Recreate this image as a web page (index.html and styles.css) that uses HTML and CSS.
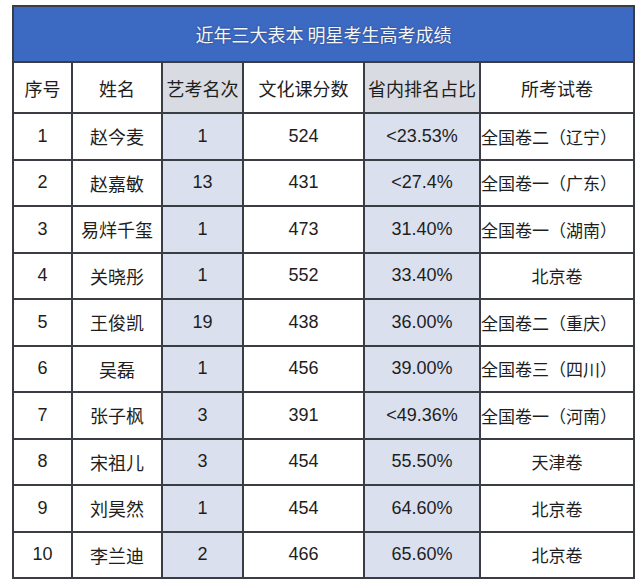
FILE: index.html
```html
<!DOCTYPE html>
<html lang="zh">
<head>
<meta charset="utf-8">
<title>近年三大表本 明星考生高考成绩</title>
<link rel="stylesheet" href="styles.css">
</head>
<body>
<table class="grid">
  <colgroup>
    <col class="c1"><col class="c2"><col class="c3"><col class="c4"><col class="c5"><col class="c6">
  </colgroup>
  <thead>
    <tr class="title-row"><th colspan="6" class="title">近年三大表本 明星考生高考成绩</th></tr>
    <tr class="head-row">
      <th>序号</th><th>姓名</th><th class="hl-head">艺考名次</th><th>文化课分数</th><th class="hl-head">省内排名占比</th><th>所考试卷</th>
    </tr>
  </thead>
  <tbody>
    <tr><td>1</td><td class="cn name">赵今麦</td><td class="hl">1</td><td>524</td><td class="hl">&lt;23.53%</td><td class="cn wide">全国卷二（辽宁）</td></tr>
    <tr><td>2</td><td class="cn name">赵嘉敏</td><td class="hl">13</td><td>431</td><td class="hl">&lt;27.4%</td><td class="cn wide">全国卷一（广东）</td></tr>
    <tr><td>3</td><td class="cn name">易烊千玺</td><td class="hl">1</td><td>473</td><td class="hl">31.40%</td><td class="cn wide">全国卷一（湖南）</td></tr>
    <tr><td>4</td><td class="cn name">关晓彤</td><td class="hl">1</td><td>552</td><td class="hl">33.40%</td><td class="cn">北京卷</td></tr>
    <tr><td>5</td><td class="cn name">王俊凯</td><td class="hl">19</td><td>438</td><td class="hl">36.00%</td><td class="cn wide">全国卷二（重庆）</td></tr>
    <tr><td>6</td><td class="cn name">吴磊</td><td class="hl">1</td><td>456</td><td class="hl">39.00%</td><td class="cn wide">全国卷三（四川）</td></tr>
    <tr><td>7</td><td class="cn name">张子枫</td><td class="hl">3</td><td>391</td><td class="hl">&lt;49.36%</td><td class="cn wide">全国卷一（河南）</td></tr>
    <tr><td>8</td><td class="cn name">宋祖儿</td><td class="hl">3</td><td>454</td><td class="hl">55.50%</td><td class="cn">天津卷</td></tr>
    <tr><td>9</td><td class="cn name">刘昊然</td><td class="hl">1</td><td>454</td><td class="hl">64.60%</td><td class="cn">北京卷</td></tr>
    <tr><td>10</td><td class="cn name">李兰迪</td><td class="hl">2</td><td>466</td><td class="hl">65.60%</td><td class="cn">北京卷</td></tr>
  </tbody>
</table>
</body>
</html>
```
FILE: styles.css
```css
html, body {
  margin: 0;
  padding: 0;
  background: #ffffff;
}
body {
  padding: 5px 8px 0 12px;
  font-family: "Liberation Sans", "Noto Sans CJK SC", sans-serif;
  color: #1e1e1e;
}
.grid {
  border-collapse: collapse;
  table-layout: fixed;
  width: 621px;
  border: 2px solid #333a44;
}
.c1 { width: 59px; }
.c2 { width: 90px; }
.c3 { width: 81px; }
.c4 { width: 121px; }
.c5 { width: 116px; }
.c6 { width: 154px; }

.grid th, .grid td {
  border: 2px solid #3a3d44;
  text-align: center;
  vertical-align: middle;
  padding: 0;
  white-space: nowrap;
  overflow: hidden;
}
.title-row { height: 56px; }
.title {
  background: #3c69c2;
  border-bottom: 2px solid #2d3f66;
  color: #f4f6fb;
  font-family: "Noto Sans CJK SC", sans-serif;
  font-weight: 400;
  font-size: 18px;
  text-shadow: 0 0 2px #233a6a;
  padding-top: 2px;
}
.head-row { height: 51px; }
.head-row th {
  font-family: "Noto Sans CJK SC", sans-serif;
  font-weight: 400;
  font-size: 18px;
  color: #1e1e1e;
  background: #ffffff;
}
.head-row th.hl-head { background: #d9dbe2; }
.grid tbody tr { height: 46.5px; }
.grid td {
  font-size: 18px;
  background: #ffffff;
}
.grid td.hl { background: #dae0ee; }
.grid td.cn {
  font-family: "Noto Sans CJK SC", sans-serif;
  font-size: 17px;
}
.grid td.name { font-size: 18px; }
.grid td.wide {
  text-align: left;
  padding-left: 0;
}
```
